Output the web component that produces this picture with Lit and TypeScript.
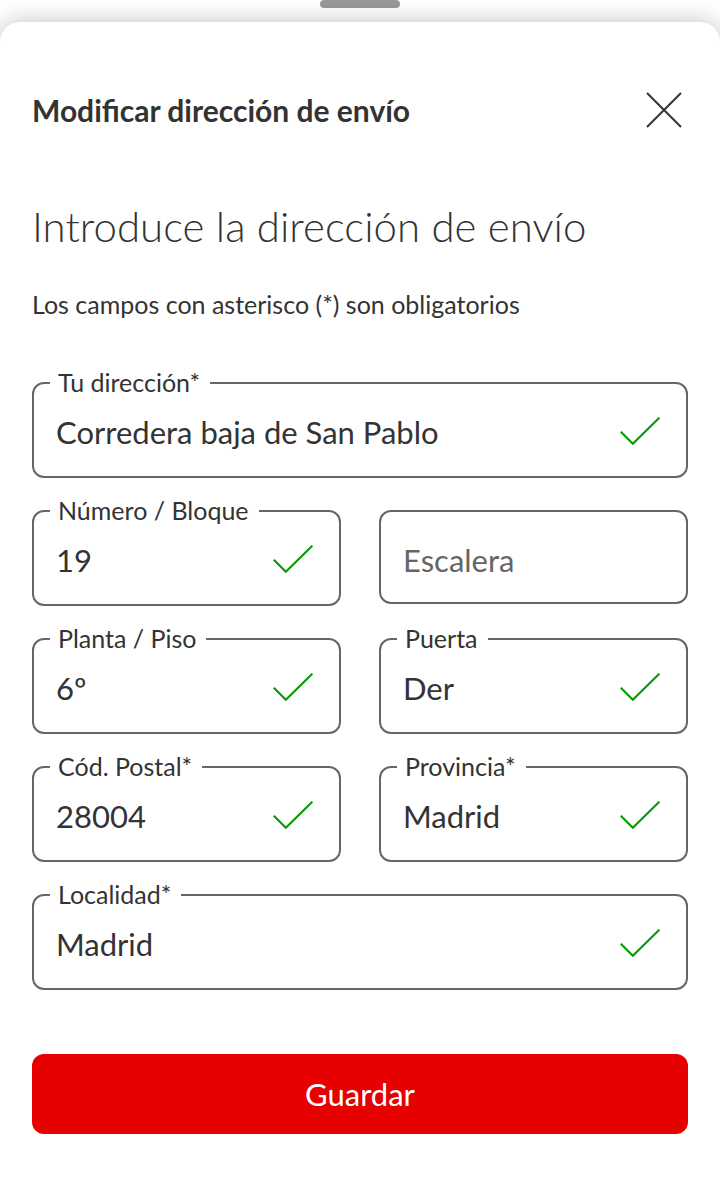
import { LitElement, html, css, nothing } from "lit";
import { customElement, property } from "lit/decorators.js";

@customElement("address-field")
class AddressField extends LitElement {
  @property() label = "";
  @property() value = "";

  static styles = css`
    :host {
      display: block;
      min-width: 0;
    }
    .box {
      margin: 0;
      padding: 0 26px 0 16px;
      min-width: 0;
      border: 2px solid #666;
      border-radius: 12px;
    }
    .legend {
      height: 24px;
      padding: 0 10px 0 8px;
      font-size: 25px;
      line-height: 22px;
      white-space: nowrap;
    }
    .row {
      display: flex;
      align-items: center;
      height: 73px;
      padding-bottom: 8px;
    }
    .box.empty {
      margin-top: 11px;
    }
    .empty .row {
      height: 84px;
      padding: 6px 0 0;
    }
    .input {
      flex: 1;
      min-width: 0;
      height: 48px;
      padding: 0 0 0 6px;
      border: 0;
      outline: 0;
      background: transparent;
      color: #333;
      font: inherit;
      font-size: 31px;
    }
    .input::placeholder {
      color: #666;
      opacity: 1;
    }
    .check {
      flex: none;
      width: 40px;
      height: 28px;
      margin-bottom: 2px;
      fill: none;
      stroke: #009900;
      stroke-width: 2;
    }
  `;

  render() {
    if (!this.value) {
      return html`<div class="box empty">
        <div class="row">
          <input class="input" type="text" aria-label=${this.label} placeholder=${this.label} />
        </div>
      </div>`;
    }
    return html`<fieldset class="box">
      <legend class="legend"><label for="field">${this.label}</label></legend>
      <div class="row">
        <input class="input" id="field" type="text" .value=${this.value} />
        <svg class="check" viewBox="0 0 40 28" aria-hidden="true">
          <path d="M0.8 14.8 L12.8 26.8 L39.4 0.6" />
        </svg>
      </div>
    </fieldset>`;
  }
}

const fields = [
  { label: "Tu dirección*", value: "Corredera baja de San Pablo", wide: true },
  { label: "Número / Bloque", value: "19" },
  { label: "Escalera", value: "" },
  { label: "Planta / Piso", value: "6º" },
  { label: "Puerta", value: "Der" },
  { label: "Cód. Postal*", value: "28004" },
  { label: "Provincia*", value: "Madrid" },
  { label: "Localidad*", value: "Madrid", wide: true },
];

@customElement("app-root")
class AppRoot extends LitElement {
  static styles = css`
    :host {
      display: flex;
      flex-direction: column;
      min-height: 100vh;
      overflow: hidden;
      background: #fff;
      color: #333;
      font-family: Lato, "Liberation Sans", sans-serif;
    }
    .handle {
      width: 80px;
      height: 8px;
      margin: 0 auto 14px;
      border-radius: 4px;
      background: #999;
    }
    .sheet {
      flex: 1;
      padding: 64px 32px;
      border-radius: 20px 20px 0 0;
      background: #fff;
      box-shadow: 0 0 24px rgba(0, 0, 0, 0.25);
    }
    .header {
      display: flex;
      align-items: center;
      justify-content: space-between;
      height: 48px;
    }
    .heading {
      margin: 0;
      font-size: 30px;
      line-height: 38px;
      font-weight: 700;
    }
    .close {
      display: flex;
      align-items: center;
      justify-content: center;
      width: 48px;
      height: 48px;
      padding: 0;
      border: 0;
      background: none;
      color: #333;
    }
    .cross {
      width: 36px;
      height: 36px;
      fill: none;
      stroke: currentColor;
      stroke-width: 2;
    }
    .title {
      margin: 64px 0 0;
      font-size: 42px;
      line-height: 56px;
      font-weight: 300;
    }
    .note {
      margin: 34px 0 51px;
      font-size: 25px;
      line-height: 32px;
    }
    .fields {
      display: grid;
      grid-template-columns: 1fr 1fr;
      gap: 21px 38px;
      align-items: start;
    }
    .wide {
      grid-column: 1 / -1;
    }
    .save {
      display: block;
      width: 100%;
      height: 80px;
      margin-top: 64px;
      padding: 0;
      border: 0;
      border-radius: 12px;
      background: #e60000;
      color: #fff;
      font: inherit;
      font-size: 31px;
    }
  `;

  render() {
    return html`
      <div class="handle"></div>
      <main class="sheet">
        <header class="header">
          <h1 class="heading">Modificar dirección de envío</h1>
          <button class="close" type="button" aria-label="Cerrar">
            <svg class="cross" viewBox="0 0 36 36" aria-hidden="true">
              <path d="M1 1 L35 35 M35 1 L1 35" />
            </svg>
          </button>
        </header>
        <h2 class="title">Introduce la dirección de envío</h2>
        <p class="note">Los campos con asterisco (*) son obligatorios</p>
        <form @submit=${(e: Event) => e.preventDefault()}>
          <div class="fields">
            ${fields.map(
              (f) => html`<address-field
                class=${f.wide ? "wide" : nothing}
                label=${f.label}
                value=${f.value}
              ></address-field>`
            )}
          </div>
          <button class="save" type="submit">Guardar</button>
        </form>
      </main>
    `;
  }
}
